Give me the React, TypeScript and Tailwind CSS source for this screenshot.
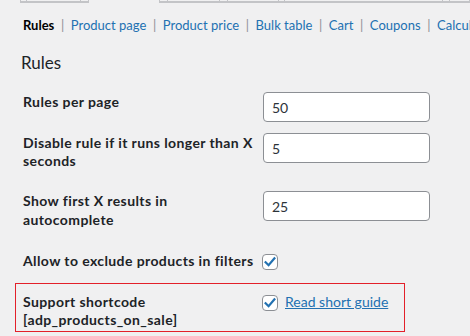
import React from "react";

function Check() {
  return (
    <span className="flex h-[16px] w-[16px] shrink-0 items-center justify-center rounded-[4px] border border-[#8c8f94] bg-white">
      <svg width="14" height="14" viewBox="0 0 14 14">
        <path d="M2.6 7.2 L5.6 10.2 L11.4 3.4" fill="none" stroke="#2271b1" strokeWidth="2.2" strokeLinecap="square" />
      </svg>
    </span>
  );
}

function Seg({ w, first }: { w: string; first?: boolean }) {
  return <div className={`${w} h-[3px] border-b-2 border-r border-[#c3c4c7] ${first ? "border-l" : ""}`} />;
}

function Bar() {
  return <span className="text-[#8c8f94]">|</span>;
}

function Tab({ children }: { children: React.ReactNode }) {
  return <span className="text-[#2271b1]">{children}</span>;
}

const label = "text-[14px] font-bold leading-[18.2px] tracking-[0.4px] text-[#1d2327]";
const input =
  "h-[30px] w-[167px] rounded-[4px] border border-[#8c8f94] bg-white px-[8px] text-[14px] text-[#2c3338] outline-none";

export default function App() {
  return (
    <div className="relative h-[336px] w-[470px] overflow-hidden bg-[#f0f0f1] font-['Lato',sans-serif] text-[#1d2327]">
      <div className="flex h-[3px]">
        <div className="w-[20px]" />
        <Seg w="w-[8px]" first />
        <Seg w="w-[55px]" />
        <Seg w="w-[8px]" />
        <div className="w-[72px]" />
        <Seg w="w-[9px]" first />
        <Seg w="w-[53px]" />
        <Seg w="w-[8px]" />
        <Seg w="w-[52px]" />
        <Seg w="w-[7px]" />
        <Seg w="w-[161px]" />
        <Seg w="w-[8px]" />
        <Seg w="w-[20px]" />
      </div>

      <div className="mt-[12px] flex gap-[6.6px] overflow-hidden whitespace-nowrap pl-[23px] text-[13px] leading-[20px]">
        <span className="font-bold text-black">Rules</span>
        <Bar />
        <Tab>Product page</Tab>
        <Bar />
        <Tab>Product price</Tab>
        <Bar />
        <Tab>Bulk table</Tab>
        <Bar />
        <Tab>Cart</Tab>
        <Bar />
        <Tab>Coupons</Tab>
        <Bar />
        <Tab>Calculator</Tab>
      </div>

      <h2 className="mt-[17px] pl-[21px] text-[17px] font-normal leading-[22px]">Rules</h2>

      <div className="mt-[18px] flex">
        <div className={`w-[263px] pl-[23px] pr-[10px] pt-[1px] ${label}`}>Rules per page</div>
        <input readOnly value="50" className={input} />
      </div>

      <div className="mt-[11px] flex">
        <div className={`w-[263px] pl-[23px] pr-[10px] pt-[1px] ${label}`}>Disable rule if it runs longer than X seconds</div>
        <input readOnly value="5" className={input} />
      </div>

      <div className="mt-[21px] flex">
        <div className={`w-[263px] pl-[23px] pr-[10px] pt-[1px] ${label}`}>Show first X results in autocomplete</div>
        <input readOnly value="25" className={input} />
      </div>

      <div className="mt-[23px] flex">
        <div className={`w-[262px] whitespace-nowrap pl-[23px] ${label}`}>Allow to exclude products in filters</div>
        <div className="mt-[2px]">
          <Check />
        </div>
      </div>

      <div className="ml-[15px] mt-[13px] flex h-[49px] w-[390px] border border-[#e3202a] pt-[9px]">
        <div className={`w-[246px] pl-[7px] ${label}`}>
          Support shortcode
          <br />
          [adp_products_on_sale]
        </div>
        <div className="flex items-start gap-[7px]">
          <div className="mt-[2px]">
            <Check />
          </div>
          <a className="text-[14px] leading-[18.2px] text-[#2271b1] underline">Read short guide</a>
        </div>
      </div>
    </div>
  );
}
